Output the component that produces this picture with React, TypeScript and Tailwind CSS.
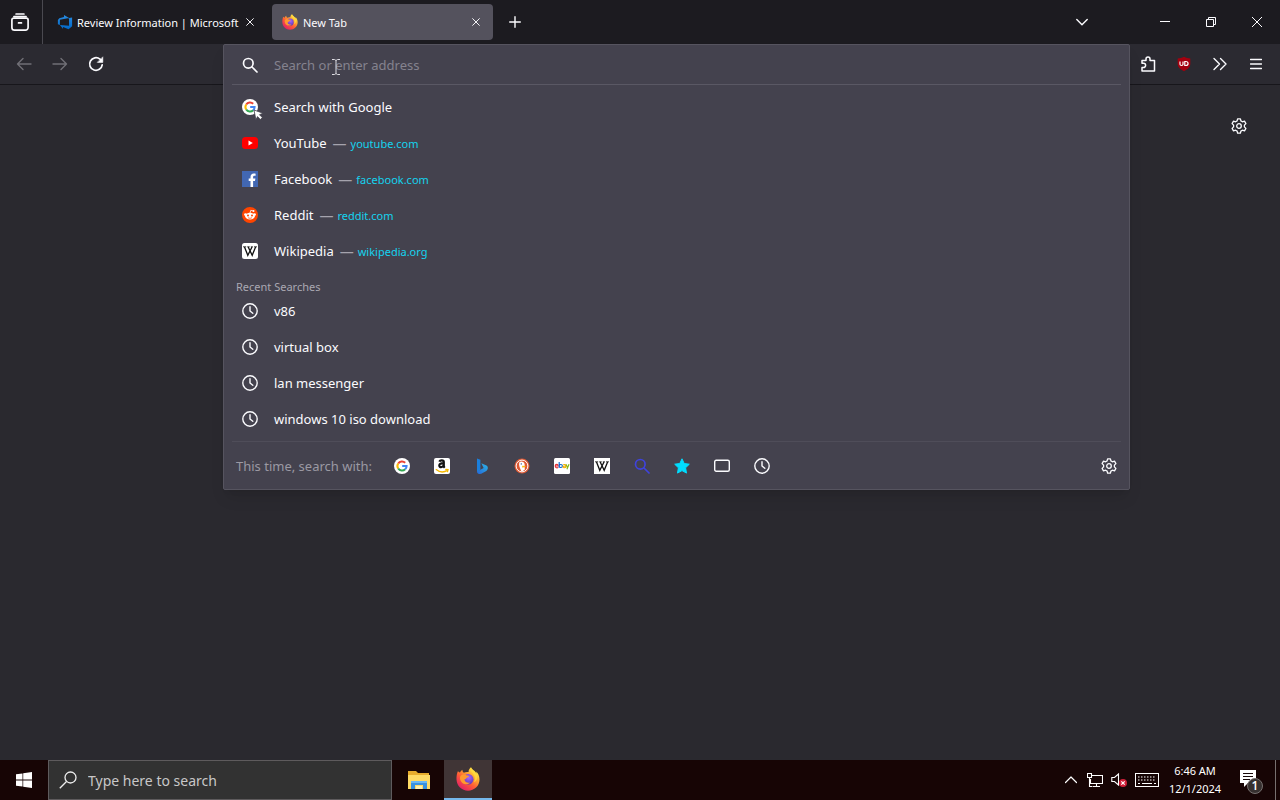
import type { ReactNode } from 'react';

type IconProps = { className?: string };

const line = {
  fill: 'none',
  stroke: 'currentColor',
  strokeWidth: 1.4,
  strokeLinecap: 'round' as const,
  strokeLinejoin: 'round' as const,
};

function FirefoxViewIcon() {
  return (
    <svg className="size-[18px]" viewBox="0 0 16 16" aria-hidden="true" {...line} strokeWidth={1.5}>
      <path d="M4.5 .9h7M2.6 3.2h10.8" />
      <path d="M2.4 4.600h11.200a1.600 1.600 0 0 1 1.600 1.600v6.600a2.400 2.400 0 0 1-2.400 2.400H3.200A2.400 2.400 0 0 1 .8 12.800V6.200a1.600 1.600 0 0 1 1.600-1.600zM6.700 8.800h2.600" />
    </svg>
  );
}

function AzureDevOpsIcon() {
  return (
    <svg className="size-4 shrink-0" viewBox="0 0 18 18" aria-hidden="true">
      <defs>
        <linearGradient id="azure" x1="0" y1="1" x2="0" y2="0">
          <stop offset="0" stopColor="#0068c8" />
          <stop offset="1" stopColor="#2a8ce0" />
        </linearGradient>
      </defs>
      <path
        fill="url(#azure)"
        d="M17 4v9.740l-4 3.280-6.200-2.260V17l-3.510-4.590 10.230.800V4.440zm-3.410.490L7.850 1v2.290L2.580 4.840 1 6.870v4.610l2.260 1V6.570z"
      />
    </svg>
  );
}

function FirefoxIcon({ className, id }: IconProps & { id: string }) {
  return (
    <svg className={className} viewBox="0 0 24 24" aria-hidden="true">
      <defs>
        <linearGradient id={`${id}-fire`} x1=".85" y1=".1" x2=".2" y2=".95">
          <stop offset="0" stopColor="#fff44f" />
          <stop offset=".3" stopColor="#ffa930" />
          <stop offset=".6" stopColor="#ff5a36" />
          <stop offset="1" stopColor="#e01e6a" />
        </linearGradient>
        <radialGradient id={`${id}-globe`} cx=".55" cy=".35" r=".7">
          <stop offset="0" stopColor="#a866f5" />
          <stop offset="1" stopColor="#5534b8" />
        </radialGradient>
      </defs>
      <path
        fill={`url(#${id}-fire)`}
        d="M15 .3c-2 1.600-2.500 3.300-2.400 4.700-2-.300-3.500 0-4.800.700C6.700 5 6.400 4 6.400 2.800 5.200 3.500 4.400 4.500 4 5.500 3 5.300 2.300 4.600 2 4 .9 6 .4 9 .5 12.500.8 19 5.800 23.700 12 23.700S23.500 19 23.500 12.500c0-3.600-1.400-6.400-3.300-8.100.2.900.2 1.600.1 2.200C19.200 3.500 15.800 2.800 15 .3z"
      />
      <circle cx="12.200" cy="12.200" r="5.300" fill={`url(#${id}-globe)`} />
      <path fill="#ff9a2e" d="M4.200 9.500c1.500-2.300 4.700-2.300 6.600-1 .9 0 2.200.2 2.200.8 0 .8-1.500 1-2.200 1.500-1 .7-1 1.700-2.400 1.800.4 2.500 3.300 3.900 6 3-2.500 2.800-8 2.300-9.700-1.800-.7-1.600-.9-3-.5-4.300z" />
      <path fill="#ffdb3d" d="M15 .3c-1.800 3.800 2.200 5 3.400 8.700.8 2.600.3 5-.6 6.400 3.500-1.600 4.500-5.700 2.400-9C18.500 3.800 15.500 3 15 .3z" opacity=".8" />
    </svg>
  );
}

function CloseIcon({ className = 'size-2' }: IconProps) {
  return (
    <svg className={className} viewBox="0 0 10 10" aria-hidden="true" {...line} strokeWidth={1.2}>
      <path d="M.8.8l8.400 8.400M9.200.8L.8 9.200" />
    </svg>
  );
}

function ArrowIcon({ className = '' }: IconProps) {
  return (
    <svg className={`size-4 ${className}`} viewBox="0 0 16 16" aria-hidden="true" {...line}>
      <path d="M15 8H1.500M7 2.500L1.500 8 7 13.500" />
    </svg>
  );
}

function ReloadIcon() {
  return (
    <svg className="size-4" viewBox="0 0 16 16" aria-hidden="true" {...line} strokeWidth={1.700}>
      <path d="M14.200 8.800A6.300 6.300 0 1 1 12 3.200l1.500 1.500" />
      <path d="M14.800 1.200v5.200H9.600z" fill="currentColor" strokeWidth=".6" />
    </svg>
  );
}

function SearchIcon({ className }: IconProps) {
  return (
    <svg className={className} viewBox="0 0 16 16" aria-hidden="true" {...line} strokeWidth={1.700}>
      <circle cx="6.300" cy="6.300" r="4.800" />
      <path d="M10 10l5 5" />
    </svg>
  );
}

function ClockIcon() {
  return (
    <svg className="size-4" viewBox="0 0 16 16" aria-hidden="true" {...line}>
      <circle cx="8" cy="8" r="7.200" />
      <path d="M8 3.800V8l2.800 2.300" />
    </svg>
  );
}

function GearIcon() {
  return (
    <svg className="size-4" viewBox="0 0 16 16" aria-hidden="true" {...line} strokeWidth={1.300}>
      <path d="M6.600.8h2.800l.5 2.100 1.500.9 2.100-.6 1.400 2.400L13.400 7.100v1.800l1.500 1.500-1.400 2.400-2.100-.6-1.500.9-.5 2.100H6.600l-.5-2.100-1.500-.9-2.100.6-1.400-2.400 1.500-1.500V7.100L1.100 5.600l1.400-2.400 2.100.6 1.500-.9z" />
      <circle cx="8" cy="8" r="2.300" />
    </svg>
  );
}

function PuzzleIcon() {
  return (
    <svg className="size-4" viewBox="0 0 16 16" aria-hidden="true" {...line} strokeWidth={1.500}>
      <path d="M2 7.300V4.500h4V3a2 2 0 0 1 4 0v1.500h4.500V15H2v-3.500h1.500a2 2 0 0 0 0-4.200z" />
    </svg>
  );
}

function ShieldIcon() {
  return (
    <svg className="size-4" viewBox="0 0 16 16" aria-hidden="true">
      <path fill="#a3000f" d="M8 .8c2.100 1.200 4.200 1.600 6.300 1.700v5.300c0 3.600-3 5.800-6.300 7.400-3.300-1.600-6.300-3.800-6.300-7.400V2.500C3.800 2.400 5.900 2 8 .8z" />
      <path fill="none" stroke="#fff" strokeWidth="1.200" d="M4 5.500v2.800c0 1.600 3 1.600 3 0V5.500M8.800 5.500v4h1c3 0 3-4 0-4z" />
    </svg>
  );
}

function GoogleIcon({ cursor = false }: { cursor?: boolean }) {
  return (
    <svg className="size-4 overflow-visible" viewBox="0 0 16 16" aria-hidden="true">
      <circle cx="8" cy="8" r="8" fill="#fff" />
      <g fill="none" strokeWidth="2">
        <path stroke="#ea4335" d="M4.200 5.500A4.600 4.600 0 0 1 11.200 4.700" />
        <path stroke="#fbbc05" d="M4.200 5.500a4.600 4.600 0 0 0 0 5" />
        <path stroke="#34a853" d="M4.200 10.500a4.600 4.600 0 0 0 7 .8" />
        <path stroke="#4285f4" d="M11.200 11.300A4.500 4.500 0 0 0 12.600 8H8.200" />
      </g>
      {cursor && <path fill="#fff" stroke="#42414d" strokeWidth=".8" d="M12 11l9 3.200-3.500 1.500 2.800 2.900-2 1.900-2.800-2.900-1.600 3.200z" />}
    </svg>
  );
}

function YouTubeIcon() {
  return (
    <svg className="size-4" viewBox="0 0 16 16" aria-hidden="true">
      <rect y="2" width="16" height="12" rx="3.500" fill="#f00" />
      <path fill="#fff" d="M6.500 5.500v5L10.800 8z" />
    </svg>
  );
}

function FacebookIcon() {
  return (
    <svg className="size-4" viewBox="0 0 16 16" aria-hidden="true">
      <rect width="16" height="16" fill="#4267b2" />
      <path fill="#fff" d="M8.500 16v-6H6.700V7.600h1.800V6c0-2.200 1.300-3.500 3.300-3.500.9 0 1.800.2 1.800.2v2.100h-1c-1.200 0-1.500.6-1.500 1.300v1.500h2.300l-.4 2.400h-1.900v6z" />
    </svg>
  );
}

function RedditIcon() {
  return (
    <svg className="size-4" viewBox="0 0 16 16" aria-hidden="true">
      <circle cx="8" cy="8" r="8" fill="#ff4500" />
      <path fill="none" stroke="#fff" strokeWidth=".8" d="M8 6l.8-2.700 2.300.6" />
      <g fill="#fff">
        <circle cx="3.500" cy="7.600" r="1.400" />
        <circle cx="12.500" cy="7.600" r="1.400" />
        <circle cx="11.500" cy="4" r="1" />
        <ellipse cx="8" cy="9.200" rx="4.800" ry="3.400" />
      </g>
      <circle cx="6" cy="8.500" r="1" fill="#ff4500" />
      <circle cx="10" cy="8.500" r="1" fill="#ff4500" />
      <path fill="none" stroke="#ff4500" strokeWidth=".7" d="M6 10.600c1 .9 3 .9 4 0" />
    </svg>
  );
}

function WikipediaIcon({ rounded = false }: { rounded?: boolean }) {
  return (
    <svg className="size-4" viewBox="0 0 16 16" aria-hidden="true">
      <rect width="16" height="16" rx={rounded ? 2.500 : 0} fill="#fff" />
      <path fill="none" stroke="#111" strokeWidth="1.300" d="M2.500 4l3.300 8.300L10 4M6.200 4l4 8.300L13.600 4" />
      <path stroke="#111" strokeWidth=".8" d="M1 3.800h3.200M5.200 3.800h2.500M8.800 3.800h2.200M12 3.800h3" />
    </svg>
  );
}

function AmazonIcon() {
  return (
    <svg className="size-4" viewBox="0 0 16 16" aria-hidden="true">
      <rect width="16" height="16" rx="2" fill="#fff" />
      <path fill="none" stroke="#111" strokeWidth="2.200" d="M5.300 3.700c.7-1.700 4.500-1.900 4.500.4v4c0 .8.400 1.200.9 1.700M9.600 5.200C7 5.200 5.300 5.900 5.300 7.600c0 2.200 3.600 2 4.400-.6" />
      <path fill="none" stroke="#f5b800" strokeWidth="1.300" strokeLinecap="round" d="M2.200 11.600c3.600 2.900 8 2.800 11.400.5M11.800 11.400l2.200.2-.5 2" />
    </svg>
  );
}

function BingIcon() {
  return (
    <svg className="size-4" viewBox="0 0 16 16" aria-hidden="true">
      <defs>
        <linearGradient id="bing" x1="0" y1="1" x2="1" y2="0">
          <stop offset="0" stopColor="#2566d8" />
          <stop offset="1" stopColor="#2cb8e8" />
        </linearGradient>
      </defs>
      <path fill="#1b7fdc" d="M3 .5l3.400 1.300v10L3 14.200z" />
      <path fill="url(#bing)" d="M7.300 5.300l5.200 2.300c1.900 1.100 1.700 4-.2 5.300L7.200 15.800C5 16.500 3 15.600 3 13.600l3.400-1.800L9.600 10z" />
    </svg>
  );
}

function DuckIcon() {
  return (
    <svg className="size-4" viewBox="0 0 16 16" aria-hidden="true">
      <circle cx="8" cy="8" r="7.500" fill="#de5833" />
      <circle cx="8" cy="8" r="5.900" fill="#de5833" stroke="#fff" strokeWidth="1" />
      <path fill="#fff" d="M5.300 4.300c2-1.700 5-.5 5.300 1.900.2 1.500-.1 3.200.3 5.200l-2.700 2.200-1-.5C6 10 4.500 7.500 5.300 4.300z" />
      <path fill="#fdbd15" d="M8.200 7.700l3.800.2-1.400 1.400-2.600.2z" />
      <circle cx="7.300" cy="5.900" r=".7" fill="#2d4f8e" />
    </svg>
  );
}

function EbayIcon() {
  return (
    <svg className="size-4" viewBox="0 0 16 16" aria-hidden="true" fill="none" strokeWidth="1.100">
      <rect width="16" height="16" rx="1.500" fill="#fff" />
      <path stroke="#e53238" d="M1.200 8h3.100c0-2.200-3.100-2.200-3.100 0s2.300 2.200 3 1.200" />
      <path stroke="#0064d2" d="M5.200 4v5.700M5.200 8c0-2 3.200-2 3.200 0s-3.200 2-3.200 0" />
      <path stroke="#f5af02" d="M9.200 7c.5-.8 2.600-.8 2.600.5v2.300M11.700 8c-3.400-.2-3.200 1.800-1.600 1.700 1 0 1.600-.6 1.600-1" />
      <path stroke="#86b817" d="M12 6.300l1.500 3.300 1.600-3.300-2.200 5" />
    </svg>
  );
}

function StarIcon() {
  return (
    <svg className="size-4" viewBox="0 0 16 16" aria-hidden="true">
      <path fill="#00ddff" stroke="#00ddff" strokeLinejoin="round" d="M8 .8l2.200 4.700 5.100.7-3.700 3.600.9 5.300L8 12.600l-4.500 2.500.9-5.300L.7 6.200l5.100-.7z" />
    </svg>
  );
}

function TabsIcon() {
  return (
    <svg className="size-4" viewBox="0 0 16 16" aria-hidden="true" {...line}>
      <rect x=".7" y="2.300" width="14.600" height="11" rx="1.500" />
    </svg>
  );
}

function ExplorerIcon() {
  return (
    <svg className="size-6" viewBox="0 0 24 24" aria-hidden="true">
      <path fill="#e8ad2d" d="M1 3h8l2 2h11v3H1z" />
      <path fill="#ffdb65" d="M1 7h22v14H1z" />
      <path fill="#3a92df" d="M4 13h16v8h-4v-4H8v4H4z" />
      <path fill="#69b8f5" d="M4 13h16v2H4z" />
      <path fill="#fff0af" d="M9 18h6v3H9z" />
    </svg>
  );
}

function NetworkIcon() {
  return (
    <svg className="size-4" viewBox="0 0 16 16" aria-hidden="true" fill="none" stroke="currentColor" strokeWidth="1.100">
      <path d="M5 3.500h10.500v8H3.500V7M9.500 11.500V14M6 14.500h7M.5 1.500h4v4h-4zM2.500 5.500v9h3" />
    </svg>
  );
}

function VolumeIcon() {
  return (
    <svg className="size-4" viewBox="0 0 16 16" aria-hidden="true">
      <path fill="none" stroke="currentColor" strokeWidth="1.100" d="M.8 5.500h2.700L7.500 2v11l-4-3.500H.8z" />
      <circle cx="12" cy="11" r="4" fill="#cf1f38" />
      <path stroke="#fff" strokeWidth="1.200" d="M10.300 9.300l3.400 3.400M13.700 9.300l-3.400 3.400" />
    </svg>
  );
}

function KeyboardIcon() {
  return (
    <svg className="h-4 w-6" viewBox="0 0 24 16" aria-hidden="true" fill="none" stroke="currentColor">
      <rect x=".5" y="1.500" width="23" height="13" />
      <path strokeWidth="1.200" strokeDasharray="1.500 1.500" d="M3 5h18M3 8h18" />
      <path strokeWidth="1.200" d="M3 11.500h2M7 11.500h10M19 11.500h2" />
    </svg>
  );
}

function NotificationIcon() {
  return (
    <svg className="h-7 w-7" viewBox="0 0 28 28" aria-hidden="true">
      <path fill="#fff" d="M3 4h16v13h-8l-4 4v-4H3z" />
      <path stroke="#180808" d="M6 7.500h10M6 10.500h10M6 13.500h7" />
      <circle cx="18" cy="20" r="7.500" fill="#36302f" stroke="#777170" />
      <text x="18" y="24" textAnchor="middle" fill="#fff" fontSize="12" fontWeight="600" fontFamily="Open Sans, sans-serif">1</text>
    </svg>
  );
}

const sites: { name: string; url?: string; icon: ReactNode }[] = [
  { name: 'Search with Google', icon: <GoogleIcon cursor /> },
  { name: 'YouTube', url: 'youtube.com', icon: <YouTubeIcon /> },
  { name: 'Facebook', url: 'facebook.com', icon: <FacebookIcon /> },
  { name: 'Reddit', url: 'reddit.com', icon: <RedditIcon /> },
  { name: 'Wikipedia', url: 'wikipedia.org', icon: <WikipediaIcon rounded /> },
];

const recent = ['v86', 'virtual box', 'lan messenger', 'windows 10 iso download'];

const engines: { name: string; icon: ReactNode }[] = [
  { name: 'Google', icon: <GoogleIcon /> },
  { name: 'Amazon', icon: <AmazonIcon /> },
  { name: 'Bing', icon: <BingIcon /> },
  { name: 'DuckDuckGo', icon: <DuckIcon /> },
  { name: 'eBay', icon: <EbayIcon /> },
  { name: 'Wikipedia', icon: <WikipediaIcon /> },
  { name: 'Search', icon: <SearchIcon className="size-4 text-[#3f43dc]" /> },
  { name: 'Bookmarks', icon: <StarIcon /> },
  { name: 'Tabs', icon: <TabsIcon /> },
  { name: 'History', icon: <ClockIcon /> },
];

function IconButton({ label, className, children }: { label: string; className: string; children: ReactNode }) {
  return (
    <button type="button" aria-label={label} className={`flex shrink-0 items-center justify-center ${className}`}>
      {children}
    </button>
  );
}

function TabStrip() {
  return (
    <header className="flex h-11 bg-[#1c1b20]">
      <IconButton label="Firefox View" className="w-[42px] pr-0.5">
        <FirefoxViewIcon />
      </IconButton>
      <div className="mr-2 w-px bg-[#4a4950]" />
      <div className="my-1 flex w-[221px] items-center pr-2 pl-1.5">
        <AzureDevOpsIcon />
        <a href="#review" className="ml-1 grow pt-0.5 text-[11px] whitespace-nowrap">
          Review Information | Microsoft
        </a>
        <IconButton label="Close Review Information" className="mr-2 size-3">
          <CloseIcon />
        </IconButton>
      </div>
      <div className="my-1 flex w-[221px] items-center rounded bg-[#54525d] pr-[11px] pl-2.5">
        <FirefoxIcon id="tab" className="size-4" />
        <a href="#new-tab" className="ml-[5px] grow pt-0.5 text-[11px]">New Tab</a>
        <IconButton label="Close New Tab" className="size-3">
          <CloseIcon />
        </IconButton>
      </div>
      <IconButton label="Open a new tab" className="w-11">
        <svg className="size-3" viewBox="0 0 12 12" aria-hidden="true" {...line}>
          <path d="M6 .7v10.600M.7 6h10.600" />
        </svg>
      </IconButton>
      <div className="grow" />
      <IconButton label="List all tabs" className="mr-10 w-10">
        <svg className="size-3" viewBox="0 0 12 12" aria-hidden="true" {...line}>
          <path d="M.8 3.500L6 8.700l5.200-5.200" />
        </svg>
      </IconButton>
      <IconButton label="Minimize" className="w-[46px]">
        <svg className="size-2.5" viewBox="0 0 10 10" aria-hidden="true" stroke="currentColor">
          <path d="M0 4.500h10" />
        </svg>
      </IconButton>
      <IconButton label="Restore" className="w-[46px]">
        <svg className="size-2.5" viewBox="0 0 10 10" aria-hidden="true" fill="none" stroke="currentColor">
          <path d="M.5 2.500h7v7h-7zM2.500 2.500v-2h7v7h-2" />
        </svg>
      </IconButton>
      <IconButton label="Close" className="w-[46px]">
        <svg className="size-2.5" viewBox="0 0 10 10" aria-hidden="true" stroke="currentColor">
          <path d="M0 0l10 10M10 0L0 10" />
        </svg>
      </IconButton>
    </header>
  );
}

function AddressPanel() {
  return (
    <section className="absolute inset-x-0 top-0 z-10 rounded-xs border border-[#56545f] bg-[#44424e] shadow-lg">
      <div className="mx-2 flex h-10 items-center border-b border-[#5a5864] pl-2.5">
        <SearchIcon className="size-4" />
        <input
          type="text"
          aria-label="Search or enter address"
          placeholder="Search or enter address"
          className="ml-4 min-w-0 grow bg-transparent pt-0.5 text-[13px] outline-none placeholder:text-[#85838e]"
        />
      </div>
      <ul className="pt-1">
        {sites.map((site) => (
          <li key={site.name}>
            <a href={`#${site.name}`} className="flex h-9 items-center pl-[18px]">
              {site.icon}
              <span className="ml-4 pt-0.5 text-[13px]">{site.name}</span>
              {site.url && (
                <>
                  <span className="ml-1.5 pt-0.5 text-sm text-[#a5a3ad]">—</span>
                  <span className="ml-1 pt-[3px] text-[11px] text-[#14d3ef]">{site.url}</span>
                </>
              )}
            </a>
          </li>
        ))}
      </ul>
      <h2 className="flex h-6 items-end pl-3 text-[11px] leading-3 text-[#aaa8b2]">Recent Searches</h2>
      <ul>
        {recent.map((term) => (
          <li key={term}>
            <a href={`#${term}`} className="flex h-9 items-center pl-[18px]">
              <ClockIcon />
              <span className="ml-4 pt-0.5 text-[13px]">{term}</span>
            </a>
          </li>
        ))}
      </ul>
      <footer className="mx-2 mt-1 flex h-12 items-center border-t border-[#4f4d59] pl-1">
        <span className="w-[146px] shrink-0 pt-0.5 text-[13px] text-[#9b99a3]">This time, search with:</span>
        {engines.map((engine) => (
          <IconButton key={engine.name} label={engine.name} className="h-10 w-10">
            {engine.icon}
          </IconButton>
        ))}
        <div className="grow" />
        <IconButton label="Search settings" className="size-6">
          <GearIcon />
        </IconButton>
      </footer>
    </section>
  );
}

function Toolbar() {
  return (
    <nav className="flex h-[41px] border-b border-[#17161b] bg-[#2b2a31]">
      <div className="flex w-[223px] shrink-0 pl-1.5">
        <IconButton label="Back" className="w-9 text-[#706f76]">
          <ArrowIcon />
        </IconButton>
        <IconButton label="Forward" className="w-9 text-[#706f76]">
          <ArrowIcon className="rotate-180" />
        </IconButton>
        <IconButton label="Reload" className="w-9">
          <ReloadIcon />
        </IconButton>
      </div>
      <div className="relative grow">
        <AddressPanel />
        <svg className="absolute top-3.5 left-[108px] z-20 h-[18px] w-2.5" viewBox="0 0 10 18" aria-hidden="true" fill="none" stroke="#dddce2">
          <path d="M1 1.500h2.500L5 2.500l1.500-1H9M5 2.500v13M1 16.500h2.500l1.500-1 1.500 1H9" />
        </svg>
      </div>
      <div className="flex shrink-0 pr-1.5">
        <IconButton label="Extensions" className="w-9">
          <PuzzleIcon />
        </IconButton>
        <IconButton label="uBlock Origin" className="w-9">
          <ShieldIcon />
        </IconButton>
        <IconButton label="More tools" className="w-9">
          <svg className="size-4" viewBox="0 0 16 16" aria-hidden="true" {...line}>
            <path d="M2 2.500L7.500 8 2 13.500M8.500 2.500L14 8l-5.500 5.500" />
          </svg>
        </IconButton>
        <IconButton label="Application menu" className="w-9">
          <svg className="size-3" viewBox="0 0 12 12" aria-hidden="true" {...line}>
            <path d="M.5 1.500h11M.5 6h11M.5 10.500h11" />
          </svg>
        </IconButton>
      </div>
    </nav>
  );
}

function Taskbar() {
  return (
    <footer className="flex h-10 bg-[#170505] text-white">
      <IconButton label="Start" className="w-12">
        <svg className="size-4" viewBox="0 0 16 16" aria-hidden="true" fill="#fff">
          <path d="M0 2.300L6.500 1.400v6.200H0zM7.200 1.300L16 0v7.600H7.200zM0 8.400h6.500v6.200L0 13.700zM7.200 8.400H16V16l-8.800-1.300z" />
        </svg>
      </IconButton>
      <label className="flex w-[344px] items-center border border-[#5e5b5d] bg-[#323232] pl-2.5">
        <svg className="size-[18px]" viewBox="0 0 18 18" aria-hidden="true" fill="none" stroke="#eee" strokeWidth="1.300">
          <circle cx="11.500" cy="6.500" r="5.500" />
          <path d="M7.500 10.500L.8 17.200" />
        </svg>
        <input
          type="text"
          aria-label="Type here to search"
          placeholder="Type here to search"
          className="ml-[11px] min-w-0 grow bg-transparent pt-0.5 text-sm outline-none placeholder:text-[#c8c7c8]"
        />
      </label>
      <IconButton label="File Explorer" className="ml-[3px] w-12">
        <ExplorerIcon />
      </IconButton>
      <IconButton label="Firefox" className="ml-px w-12 border-b-2 border-[#76b9ed] bg-[#403536]">
        <FirefoxIcon id="taskbar" className="size-6" />
      </IconButton>
      <div className="grow" />
      <IconButton label="Show hidden icons" className="w-6">
        <svg className="size-3" viewBox="0 0 12 12" aria-hidden="true" {...line} strokeWidth={1.200}>
          <path d="M.5 8.500L6 3l5.500 5.500" />
        </svg>
      </IconButton>
      <IconButton label="Network" className="w-6">
        <NetworkIcon />
      </IconButton>
      <IconButton label="Volume" className="w-6">
        <VolumeIcon />
      </IconButton>
      <IconButton label="Keyboard" className="w-8">
        <KeyboardIcon />
      </IconButton>
      <button type="button" className="w-16 text-center text-[11px] leading-[18px]">
        <time dateTime="2024-12-01T06:46">
          6:46 AM
          <br />
          12/1/2024
        </time>
      </button>
      <IconButton label="Notifications" className="w-12">
        <NotificationIcon />
      </IconButton>
      <button type="button" aria-label="Show desktop" className="w-[5px] border-l border-[#77706f]" />
    </footer>
  );
}

export default function App() {
  return (
    <div className="flex min-h-screen flex-col bg-[#2a292f] font-['Noto_Sans','Open_Sans',sans-serif] text-[#fbfbfe]">
      <TabStrip />
      <Toolbar />
      <main className="flex min-h-[410px] grow items-start justify-end pt-[33px] pr-[33px]">
        <button type="button" aria-label="Personalize new tab">
          <GearIcon />
        </button>
      </main>
      <Taskbar />
    </div>
  );
}
